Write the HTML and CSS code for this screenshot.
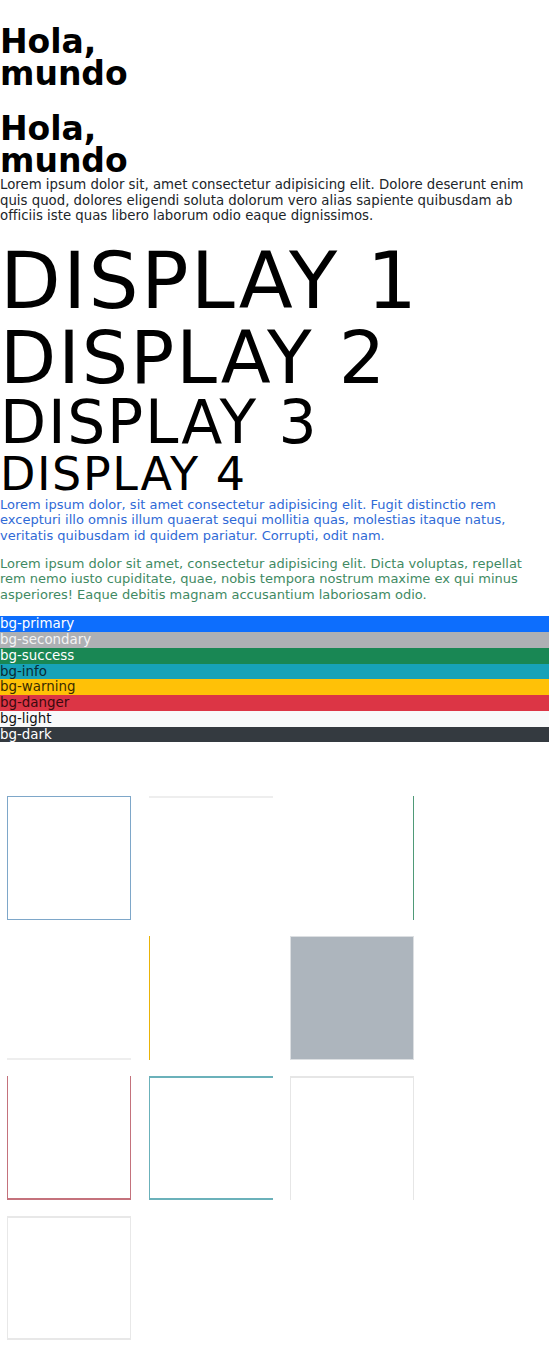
FILE: index.html
```html
<!DOCTYPE html>
<html lang="es">
<head>
<meta charset="utf-8">
<title>Hola, mundo</title>
<link rel="stylesheet" href="styles.css">
</head>
<body>
<h1 class="title title-first">Hola, mundo</h1>
<h1 class="title title-second">Hola, mundo</h1>
<p class="intro">Lorem ipsum dolor sit, amet consectetur adipisicing elit. Dolore deserunt enim quis quod, dolores eligendi soluta dolorum vero alias sapiente quibusdam ab officiis iste quas libero laborum odio eaque dignissimos.</p>
<h1 class="display display-1">DISPLAY 1</h1>
<h1 class="display display-2">DISPLAY 2</h1>
<h1 class="display display-3">DISPLAY 3</h1>
<h1 class="display display-4">DISPLAY 4</h1>
<p class="text text-primary">Lorem ipsum dolor, sit amet consectetur adipisicing elit. Fugit distinctio rem excepturi illo omnis illum quaerat sequi mollitia quas, molestias itaque natus, veritatis quibusdam id quidem pariatur. Corrupti, odit nam.</p>
<p class="text text-success">Lorem ipsum dolor sit amet, consectetur adipisicing elit. Dicta voluptas, repellat rem nemo iusto cupiditate, quae, nobis tempora nostrum maxime ex qui minus asperiores! Eaque debitis magnam accusantium laboriosam odio.</p>
<div class="bars">
  <div class="bar bg-primary">bg-primary</div>
  <div class="bar bg-secondary">bg-secondary</div>
  <div class="bar bg-success">bg-success</div>
  <div class="bar bg-info">bg-info</div>
  <div class="bar bg-warning">bg-warning</div>
  <div class="bar bg-danger">bg-danger</div>
  <div class="bar bg-light">bg-light</div>
  <div class="bar bg-dark">bg-dark</div>
</div>
<div class="boxes">
  <div class="box b-primary-all"></div>
  <div class="box b-top-light"></div>
  <div class="box b-right-success"></div>
  <div class="box b-bottom-light"></div>
  <div class="box b-left-warning"></div>
  <div class="box b-filled"></div>
  <div class="box b-danger-notop"></div>
  <div class="box b-info-noright"></div>
  <div class="box b-light-nobottom"></div>
  <div class="box b-light-all"></div>
</div>
</body>
</html>
```
FILE: styles.css
```css
html, body {
  margin: 0;
  padding: 0;
  background: #ffffff;
}
body {
  font-family: "DejaVu Sans", Verdana, sans-serif;
  color: #212529;
}
.title {
  width: min-content;
  font-size: 33px;
  line-height: 32px;
  font-weight: bold;
  color: #000;
  margin: 0;
}
.title-first {
  margin-top: 26px;
  margin-bottom: 23px;
}
.intro {
  font-size: 13.3px;
  line-height: 15.6px;
  margin: 0 0 18px;
}
.display {
  font-weight: normal;
  color: #000;
  margin: 0;
  line-height: 1;
  letter-spacing: 0.028em;
}
.display-1 { font-size: 79px; }
.display-2 { font-size: 73px; }
.display-3 { font-size: 60px; line-height: 57px; }
.display-4 { font-size: 46px; letter-spacing: 0.034em; }
.text {
  font-size: 13px;
  line-height: 15.6px;
  margin: 0;
}
.text-primary {
  color: #2f6ad6;
  margin-bottom: 12px;
}
.text-success {
  color: #3f8a63;
  margin-bottom: 14px;
}
.bars {
  display: flex;
  flex-direction: column;
}
.bar {
  height: 15.75px;
  font-size: 13.4px;
  line-height: 16px;
  white-space: nowrap;
}
.bg-primary { background: #0d6efd; color: #fff; }
.bg-secondary { background: #adb0b4; color: #f4f4f4; }
.bg-success { background: #198754; color: #fff; }
.bg-info { background: #17a2b8; color: #0b2a33; }
.bg-warning { background: #ffc107; color: #3a2c00; }
.bg-danger { background: #dc3545; color: #3a0a0e; }
.bg-light { background: #f8f9fa; color: #111; }
.bg-dark { background: #343a40; color: #fff; }

.boxes {
  margin-top: 54px;
  padding-left: 7px;
  display: grid;
  grid-template-columns: repeat(3, 124px);
  column-gap: 17.5px;
  row-gap: 16px;
}
.box {
  box-sizing: border-box;
  height: 124px;
}
.b-primary-all { border: 1px solid #7ea7c9; }
.b-top-light { border-top: 2px solid #eeeeee; }
.b-right-success { border-right: 1px solid #4f9a78; }
.b-bottom-light { border-bottom: 2px solid #eeeeee; }
.b-left-warning { border-left: 1px solid #e9b308; }
.b-filled { background: #adb5bd; border: 1px solid #dcdfe2; }
.b-danger-notop { border: 1px solid #c4727c; border-top: 0; border-bottom-width: 2px; }
.b-info-noright { border: 1px solid #6bb1ba; border-top-width: 2px; border-bottom-width: 2px; border-right: 0; }
.b-light-nobottom { border: 1px solid #e6e6e6; border-top-width: 2px; border-bottom: 0; }
.b-light-all { border: 1px solid #e8e8e8; border-top-width: 2px; border-bottom-width: 2px; }
```
